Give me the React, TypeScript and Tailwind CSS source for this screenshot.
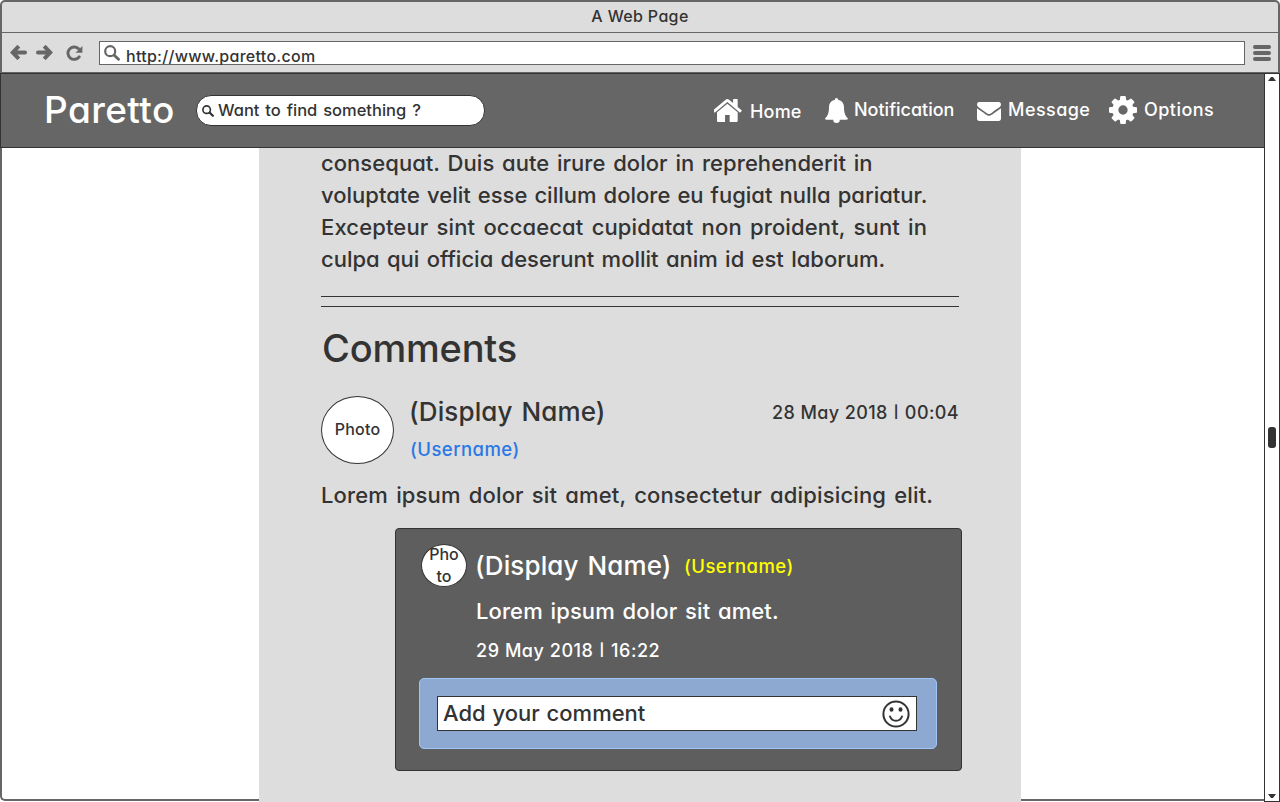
import React from "react";

function ArrowIcon({ className = "" }: { className?: string }) {
  return (
    <svg viewBox="0 0 17 15" className={"h-[15px] w-[17px] shrink-0 " + className} fill="none" stroke="#666" strokeWidth="4">
      <path d="M8.800 1.200 2.800 7.500l6 6.300" strokeLinejoin="miter" />
      <path d="M4 7.500h11" strokeLinecap="round" />
    </svg>
  );
}

function ReloadIcon() {
  return (
    <svg viewBox="0 0 17 16" className="h-4 w-[17px] shrink-0" fill="none">
      <path d="M13.200 11.800A6.200 6.200 0 1 1 12.400 3.600" stroke="#666" strokeWidth="2.900" strokeLinecap="round" />
      <path d="M16.400 1v6.700H9.600z" fill="#666" />
    </svg>
  );
}

function SearchIcon({ className = "" }: { className?: string }) {
  return (
    <svg viewBox="0 0 16 16" className={"shrink-0 " + className} fill="none" stroke="currentColor" strokeLinecap="round">
      <circle cx="6.200" cy="6.200" r="5" strokeWidth="2.200" />
      <path d="m10.200 10.200 4.300 4.100" strokeWidth="2.900" />
    </svg>
  );
}

function HomeIcon() {
  return (
    <svg viewBox="89 253 1614 1283" className="h-[23px] w-[29px] shrink-0" fill="#fff">
      <path d="M1408 992v480q0 26-19 45t-45 19h-384v-384h-256v384h-384q-26 0-45-19t-19-45v-480q0-1 .5-3t.5-3l575-474 575 474q1 2 1 6zm223-69l-62 74q-8 9-21 11h-3q-13 0-21-7l-692-577-692 577q-12 8-24 7-13-2-21-11l-62-74q-8-10-7-23.500t11-21.500l719-599q32-26 76-26t76 26l244 204v-195q0-14 9-23t23-9h192q14 0 23 9t9 23v408l219 182q10 8 11 21.500t-7 23.500z" />
    </svg>
  );
}

function BellIcon() {
  return (
    <svg viewBox="0 0 23 25" className="h-[25px] w-[23px] shrink-0" fill="#fff">
      <path d="M11.500 0c1 0 1.700.7 1.600 1.800 3.900.8 5.900 3.900 5.900 7.400 0 5.500 1.200 8.700 4 11.300 0 .7-.6 1.200-1.400 1.200H14.800a3.300 3.300 0 0 1-6.600 0H1.400C.6 21.700 0 21.200 0 20.500c2.800-2.600 4-5.800 4-11.300 0-3.500 2-6.600 5.900-7.400C9.800.7 10.500 0 11.500 0z" />
    </svg>
  );
}

function MailIcon() {
  return (
    <svg viewBox="0 256 1792 1408" preserveAspectRatio="none" className="h-[19px] w-6 shrink-0" fill="#fff">
      <path d="M1792 710v794q0 66-47 113t-113 47h-1472q-66 0-113-47t-47-113v-794q44 49 101 87 362 246 497 345 57 42 92.500 65.500t94.500 48 110 24.500h2q51 0 110-24.500t94.500-48 92.500-65.500q170-123 498-345 57-39 100-87zm0-294q0 79-49 151t-122 123q-376 261-468 325-10 7-42.500 31t-54 38.500-52 32.500-57.500 27-50 9h-2q-23 0-50-9t-57.500-27-52-32.500-54-38.500-42.500-31q-91-64-262-182.500t-205-142.500q-62-42-117-115.500t-55-136.500q0-78 41.500-130t118.500-52h1472q65 0 112.500 47t47.500 113z" />
    </svg>
  );
}

function GearIcon() {
  return (
    <svg viewBox="128 128 1536 1536" className="h-7 w-7 shrink-0" fill="#fff">
      <path d="M1152 896q0-106-75-181t-181-75-181 75-75 181 75 181 181 75 181-75 75-181zm512-109v222q0 12-8 23t-20 13l-185 28q-19 54-39 91 35 50 107 138 10 12 10 25t-9 23q-27 37-99 108t-94 71q-12 0-26-9l-138-108q-44 23-91 38-16 136-29 186-7 28-36 28h-222q-14 0-24.500-8.500t-11.500-21.500l-28-184q-49-16-90-37l-141 107q-10 9-25 9-14 0-25-11-126-114-165-168-7-10-7-23 0-12 8-23 15-21 51-66.500t54-70.500q-27-50-41-99l-183-27q-13-2-21-12.500t-8-23.500v-222q0-12 8-23t19-13l186-28q14-46 39-92-40-57-107-138-10-12-10-24 0-10 9-23 26-36 98.500-107.500t94.500-71.500q13 0 26 10l138 107q44-23 91-38 16-136 29-186 7-28 36-28h222q14 0 24.500 8.500t11.500 21.500l28 184q49 16 90 37l142-107q9-9 24-9 13 0 25 10 129 119 165 170 7 8 7 22 0 12-8 23-15 21-51 66.500t-54 70.500q26 50 41 98l183 28q13 2 21 12.500t8 23.500z" />
    </svg>
  );
}

function SmileIcon() {
  return (
    <svg viewBox="0 0 28 28" className="h-7 w-7 shrink-0" fill="none" stroke="#333" strokeWidth="2" strokeLinecap="round">
      <circle cx="14" cy="14" r="12.600" />
      <path d="M8 16.500c1.200 3 3.400 4.300 6 4.300s4.800-1.300 6-4.300" />
      <ellipse cx="9.500" cy="9.500" rx="2" ry="2.300" fill="#333" stroke="none" />
      <ellipse cx="18.500" cy="9.500" rx="2" ry="2.300" fill="#333" stroke="none" />
    </svg>
  );
}

function Stamp({ date, time }: { date: string; time: string }) {
  return (
    <>
      {date} <span className="inline-block -translate-y-px scale-y-[0.68]">|</span> {time}
    </>
  );
}

function TitleBar() {
  return (
    <div className="flex h-[33px] justify-center rounded-t-[5px] border-x-2 border-t-2 border-b border-[#666] bg-[#ddd] text-base leading-[28px] tracking-[0.35px]">
      A Web Page
    </div>
  );
}

function Toolbar() {
  return (
    <div className="flex h-10 items-start border-x-2 border-b border-[#666] bg-[#ddd] pl-2">
      <ArrowIcon className="mt-3" />
      <ArrowIcon className="mt-3 ml-[9px] -scale-x-100" />
      <div className="mt-3 ml-[13px]">
        <ReloadIcon />
      </div>
      <div className="mt-2 ml-4 flex h-6 w-[1146px] items-start border border-[#666] bg-white pl-1">
        <SearchIcon className="mt-[3px] h-4 w-4 text-[#666]" />
        <span className="ml-[6px] text-base leading-[28px] tracking-[0.29px]">http://www.paretto.com</span>
      </div>
      <div className="mt-3 ml-2 flex flex-col gap-[2px]">
        <span className="h-1 w-[18px] rounded-sm bg-[#666]" />
        <span className="h-1 w-[18px] rounded-sm bg-[#666]" />
        <span className="h-1 w-[18px] rounded-sm bg-[#666]" />
      </div>
    </div>
  );
}

function SiteHeader() {
  return (
    <header className="flex h-[75px] items-start border-y border-l border-[#333] bg-[#666] text-[18px] leading-[28px] text-white">
      <h1 className="mt-[13px] ml-[43px] w-[152px] text-[37px] leading-[46px] tracking-[0.4px]">Paretto</h1>
      <label className="mt-[21px] flex h-[31px] w-[289px] items-center rounded-[15px] border border-[#333] bg-white pl-[5px] text-[#333]">
        <SearchIcon className="h-3 w-3" />
        <span className="ml-1 -mt-[2px] text-[16.500px] [word-spacing:1.500px]">Want to find something ?</span>
      </label>
      <nav className="flex items-start">
        <a className="mt-[25px] ml-[229px] flex w-[111px]">
          <HomeIcon />
          <span className="ml-[7px] -mt-[1px] tracking-[0.2px]">Home</span>
        </a>
        <a className="mt-6 flex w-[152px]">
          <BellIcon />
          <span className="ml-[6px] -mt-[2px]">Notification</span>
        </a>
        <a className="mt-[22px] flex w-[132px]">
          <span className="mt-[6px]"><MailIcon /></span>
          <span className="ml-[7px] tracking-[0.45px]">Message</span>
        </a>
        <a className="mt-[22px] flex">
          <GearIcon />
          <span className="ml-[7px] tracking-[0.45px]">Options</span>
        </a>
      </nav>
    </header>
  );
}

function Article() {
  return (
    <p className="text-[22px] leading-8 whitespace-nowrap">
      <span className="block tracking-[0.05px] [word-spacing:1.800px]">consequat. Duis aute irure dolor in reprehenderit in</span>
      <span className="block [word-spacing:1.200px]">voluptate velit esse cillum dolore eu fugiat nulla pariatur.</span>
      <span className="block tracking-[0.130px] [word-spacing:2.200px]">Excepteur sint occaecat cupidatat non proident, sunt in</span>
      <span className="block [word-spacing:1.450px]">culpa qui officia deserunt mollit anim id est laborum.</span>
    </p>
  );
}

function Comment() {
  return (
    <section className="mt-6">
      <div className="flex h-[68px] items-start">
        <div className="flex h-[68px] w-[73px] items-center justify-center rounded-[50%] border border-[#333] bg-white pb-[2px] text-base tracking-[0.200px]">Photo</div>
        <div className="ml-[15px] flex-1">
          <h3 className="text-[26px] leading-8 tracking-[0.100px] [word-spacing:2px]">(Display Name)</h3>
          <div className="mt-[7px] pl-px text-[18.500px] leading-7 tracking-[0.450px] text-[#2b78e4]">(Username)</div>
        </div>
        <time className="mt-[3px] text-[18px] leading-7 tracking-[0.400px]">
          <Stamp date="28 May 2018" time="00:04" />
        </time>
      </div>
      <p className="mt-[15px] text-[22px] leading-8 tracking-[0.150px] whitespace-nowrap [word-spacing:2.100px]">
        Lorem ipsum dolor sit amet, consectetur adipisicing elit.
      </p>
    </section>
  );
}

function Reply() {
  return (
    <section className="mt-[17px] ml-[74px] h-[243px] w-[567px] rounded border border-[#333] bg-[#5e5e5e] px-[23px] pt-[15px] text-white">
      <div className="flex items-start pl-[2px]">
        <div className="h-[43px] w-[46px] shrink-0 rounded-[50%] border border-[#333] bg-white text-center text-base leading-[22px] text-[#333]">
          <div className="-mt-[2px]">Pho<br />to</div>
        </div>
        <div className="ml-2">
          <div className="mt-[6px] flex items-start whitespace-nowrap">
            <h3 className="w-[209px] text-[26px] leading-8 tracking-[0.100px] [word-spacing:2px]">(Display Name)</h3>
            <span className="mt-[2px] text-[18.500px] leading-7 tracking-[0.450px] text-[#ffff00]">(Username)</span>
          </div>
          <p className="mt-[13px] pl-px text-[22px] leading-8 tracking-[0.100px] [word-spacing:1.800px]">Lorem ipsum dolor sit amet.</p>
          <time className="mt-[10px] block pl-px text-[18px] leading-7 tracking-[0.550px]">
            <Stamp date="29 May 2018" time="16:22" />
          </time>
        </div>
      </div>
      <div className="mt-[13px] h-[71px] w-[518px] rounded-[5px] border border-[#9fc5f8] bg-[#8ea9d1] px-[17px] pt-[17px]">
        <div className="flex h-[35px] w-[480px] items-center justify-between border border-[#333] bg-white pr-[6px] pl-[5px] text-[22px] leading-8 text-[#333]">
          <span className="-mt-[2px] [word-spacing:1px]">Add your comment</span>
          <SmileIcon />
        </div>
      </div>
    </section>
  );
}

function Scrollbar() {
  return (
    <div className="flex h-[729px] w-4 flex-col items-center border border-[#333] bg-white">
      <svg viewBox="0 0 8 4" className="mt-[3px] h-1 w-2 shrink-0" fill="#333"><path d="M0 4h8L5 0H3z" /></svg>
      <div className="mt-[346px] h-[21px] w-2 shrink-0 rounded-[3px] bg-[#333]" />
      <svg viewBox="0 0 8 4" className="mt-auto mb-[3px] h-1 w-2 shrink-0" fill="#333"><path d="M0 0h8L5 4H3z" /></svg>
    </div>
  );
}

export default function App() {
  return (
    <div className="h-[802px] w-[1280px] overflow-hidden bg-white font-[Inter,sans-serif] font-medium text-[#333] [font-feature-settings:'cv11'] [font-optical-sizing:none]">
      <TitleBar />
      <Toolbar />
      <div className="flex items-start">
        <div className="w-[1264px]">
          <SiteHeader />
          <main className="flex items-start">
            <div className="h-[653px] w-[259px] rounded-bl-[5px] border-b-2 border-l-2 border-[#666]" />
            <div className="h-[654px] w-[762px] bg-[#ddd] pl-[62px]">
              <div className="-mt-px w-[638px]">
                <Article />
                <div className="mt-[21px] h-[11px] border-y border-[#333]" />
                <h2 className="mt-[17px] pl-px text-[38px] leading-[48px] tracking-[-0.200px]">Comments</h2>
                <Comment />
                <Reply />
              </div>
            </div>
            <div className="h-[653px] flex-1 border-b-2 border-[#666]" />
          </main>
        </div>
        <Scrollbar />
      </div>
    </div>
  );
}
